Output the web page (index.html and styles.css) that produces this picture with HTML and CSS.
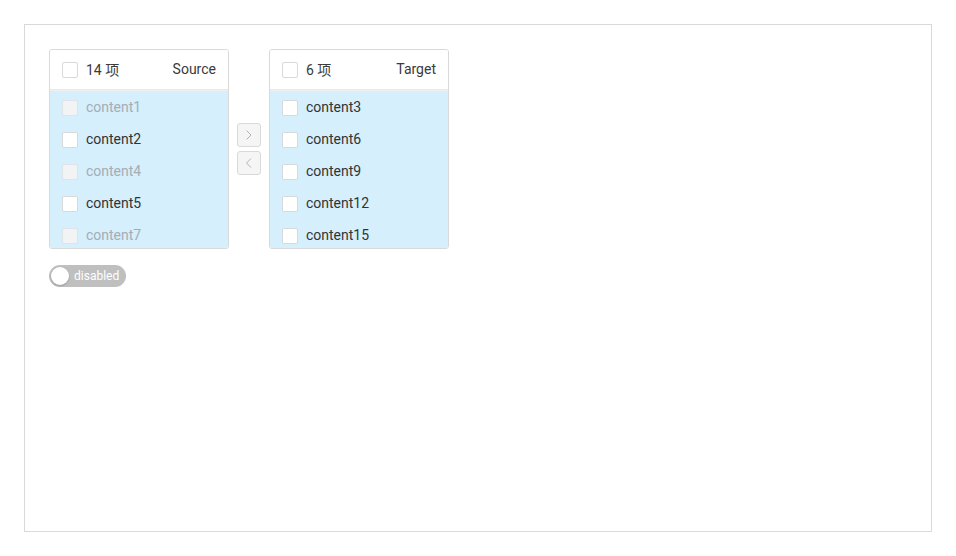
FILE: index.html
```html
<!DOCTYPE html>
<html>
<head>
<meta charset="utf-8">
<link rel="stylesheet" href="styles.css">
</head>
<body>
<div class="frame">
  <div class="transfer">
    <div class="panel">
      <div class="panel-head">
        <span class="cb"></span>
        <span class="count">14 项</span>
        <span class="title">Source</span>
      </div>
      <ul class="list">
        <li class="item disabled"><span class="cb"></span>content1</li>
        <li class="item"><span class="cb"></span>content2</li>
        <li class="item disabled"><span class="cb"></span>content4</li>
        <li class="item"><span class="cb"></span>content5</li>
        <li class="item disabled"><span class="cb"></span>content7</li>
      </ul>
    </div>
    <div class="ops">
      <button class="op"><svg width="12" height="12" viewBox="0 0 12 12"><path d="M3.5 1.5 L8 6 L3.5 10.5" fill="none" stroke="#b3b3b3" stroke-width="1"/></svg></button>
      <button class="op"><svg width="12" height="12" viewBox="0 0 12 12"><path d="M8 1.5 L3.5 6 L8 10.5" fill="none" stroke="#b3b3b3" stroke-width="1"/></svg></button>
    </div>
    <div class="panel">
      <div class="panel-head">
        <span class="cb"></span>
        <span class="count">6 项</span>
        <span class="title">Target</span>
      </div>
      <ul class="list">
        <li class="item"><span class="cb"></span>content3</li>
        <li class="item"><span class="cb"></span>content6</li>
        <li class="item"><span class="cb"></span>content9</li>
        <li class="item"><span class="cb"></span>content12</li>
        <li class="item"><span class="cb"></span>content15</li>
      </ul>
    </div>
  </div>
  <div class="switch"><span class="knob"></span><span class="switch-label">disabled</span></div>
</div>
</body>
</html>
```
FILE: styles.css
```css
* { box-sizing: border-box; }
html, body { margin: 0; padding: 0; background: #fff; }
body {
  padding: 24px;
  font-family: Roboto, "Noto Sans CJK SC", sans-serif;
  font-size: 14px;
  color: #333;
}
.frame {
  width: 908px;
  height: 508px;
  border: 1px solid #d9d9d9;
  padding: 24px;
}
.transfer {
  display: flex;
  align-items: center;
}
.panel {
  width: 180px;
  height: 200px;
  border: 1px solid #d9d9d9;
  border-radius: 3px;
  overflow: hidden;
  display: flex;
  flex-direction: column;
}
.panel-head {
  height: 40px;
  display: flex;
  align-items: center;
  padding: 0 12px 1px;
  border-bottom: 1px solid #e8e8e8;
  background: #fff;
  flex: none;
}
.panel-head .cb { margin-top: 1px; }
.cb {
  width: 16px;
  height: 16px;
  border: 1px solid #d9d9d9;
  border-radius: 2px;
  background: #fff;
  flex: none;
  margin-right: 8px;
}
.count { flex: 1; color: #3a3a3a; }
.title { color: #3a3a3a; }
.list {
  list-style: none;
  margin: 0;
  padding: 1px 0 0;
  flex: 1;
  background: #d5effd;
  border-top: 1px solid #f0f0f0;
}
.item {
  height: 32px;
  display: flex;
  align-items: center;
  padding: 0 12px 2px;
  color: #333;
}
.item .cb { margin-top: 2px; }
.item.disabled { color: #a4adb3; }
.item.disabled .cb { background: #f2f3f4; border-color: #dde3e6; }
.ops {
  display: flex;
  flex-direction: column;
  gap: 4px;
  margin: 0 8px;
}
.op {
  width: 24px;
  height: 24px;
  padding: 0;
  border: 1px solid #d9d9d9;
  border-radius: 3px;
  background: #f5f5f5;
  display: flex;
  align-items: center;
  justify-content: center;
}
.switch {
  margin-top: 16px;
  width: 77px;
  height: 22px;
  border-radius: 11px;
  background: #bfbfbf;
  display: flex;
  align-items: center;
  padding: 0 2px;
}
.knob {
  width: 18px;
  height: 18px;
  border-radius: 50%;
  background: #fff;
  box-shadow: 0 1px 2px rgba(0,0,0,0.2);
  flex: none;
}
.switch-label {
  color: #fff;
  font-size: 12px;
  margin-left: 5px;
}
```
